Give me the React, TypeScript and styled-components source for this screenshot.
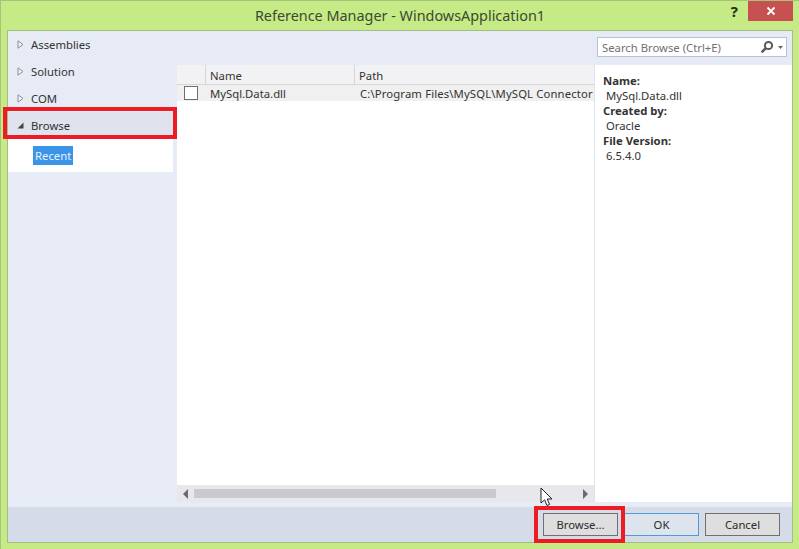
import React from 'react';
import styled, { createGlobalStyle } from 'styled-components';

const GlobalStyle = createGlobalStyle`
  html, body {
    margin: 0;
    padding: 0;
    background: #c6ea86;
  }
  body {
    font-family: 'Noto Sans', 'Open Sans', sans-serif;
    font-size: 11.3px;
    color: #2b2b2b;
  }
`;

const Window = styled.div`
  position: relative;
  width: 799px;
  height: 549px;
  box-sizing: border-box;
  display: flex;
  flex-direction: column;
  overflow: hidden;
  background: #c6ea86;
  border-top: 1px solid #a5c47a;
  border-left: 1px solid #a5c47a;
`;

const TitleBar = styled.div`
  position: relative;
  height: 29px;
  flex: none;
  display: flex;
  align-items: center;
  justify-content: center;
`;

const Title = styled.div`
  font-size: 14.4px;
  color: #3a4a32;
`;

const HelpMark = styled.span`
  position: absolute;
  top: 0;
  right: 61px;
  font-size: 15px;
  font-weight: 700;
  color: #1f2f18;
`;

const CloseButton = styled.div`
  position: absolute;
  top: 0;
  right: 6px;
  width: 45px;
  height: 20px;
  background: #c75050;
  color: #fff;
  display: flex;
  align-items: center;
  justify-content: center;
`;

const Client = styled.div`
  flex: 1;
  margin: 0 6px 6px 6px;
  min-height: 0;
  display: flex;
  flex-direction: column;
  border: 1px solid #a3bd85;
  background: #e6ebf5;
`;

const Main = styled.div`
  flex: 1;
  min-height: 0;
  display: flex;
`;

const Sidebar = styled.div`
  width: 169px;
  flex: none;
`;

const NavRow = styled.div<{ $active?: boolean }>`
  height: ${({ $active }) => ($active ? '26px' : '27px')};
  display: flex;
  align-items: center;
  padding-left: 9px;
  gap: 7px;
  margin-right: 4px;
  color: #333;
  background: ${({ $active }) => ($active ? '#dee3ee' : 'transparent')};
`;

const NavChildren = styled.div`
  height: 34px;
  margin-right: 4px;
  background: #fff;
  display: flex;
  align-items: center;
  padding-left: 25px;
`;

const SelectedItem = styled.span`
  background: #3b94e8;
  color: #e4f2ff;
  padding: 2px;
  line-height: 15px;
`;

const RightColumn = styled.div`
  flex: 1;
  min-width: 0;
  display: flex;
  flex-direction: column;
  padding-bottom: 5px;
`;

const SearchRow = styled.div`
  height: 34px;
  box-sizing: border-box;
  flex: none;
  display: flex;
  align-items: flex-start;
  justify-content: flex-end;
  padding: 6px 5px 0 0;
`;

const SearchBox = styled.div`
  width: 190px;
  height: 20px;
  box-sizing: border-box;
  display: flex;
  align-items: center;
  justify-content: space-between;
  padding: 0 3px 0 4px;
  background: #fff;
  border: 1px solid #b8c2d6;
  color: #717171;
`;

const SearchIcons = styled.span`
  display: flex;
  align-items: center;
  gap: 4px;
`;

const Panels = styled.div`
  flex: 1;
  min-height: 0;
  display: flex;
`;

const ListPane = styled.div`
  width: 417px;
  flex: none;
  display: flex;
  flex-direction: column;
`;

const ListBody = styled.div`
  flex: 1;
  min-height: 0;
  background: #fff;
  overflow: hidden;
`;

const HeaderRow = styled.div`
  height: 20px;
  box-sizing: border-box;
  display: grid;
  grid-template-columns: 29px 149px 1fr;
  background: #f2f2f4;
  border-bottom: 1px solid #d6d6d6;
`;

const HeaderCell = styled.div`
  display: flex;
  align-items: center;
  padding: 1px 0 0 4px;
  border-right: 1px solid #d6d6d6;
  color: #333;

  &:last-child {
    border-right: 0;
  }
`;

const DataRow = styled.div`
  height: 16px;
  display: grid;
  grid-template-columns: 29px 149px 1fr;
  background: #f0f0f0;
  line-height: 17px;
  color: #333;
`;

const DataCell = styled.div`
  padding-left: 4px;
  white-space: nowrap;
  overflow: hidden;
`;

const PathCell = styled(DataCell)`
  padding-left: 5px;
  letter-spacing: 0.13px;
`;

const CheckCell = styled.div`
  display: flex;
  align-items: center;
  padding-left: 7px;
`;

const CheckBox = styled.span`
  width: 12px;
  height: 12px;
  border: 1px solid #6f6f6f;
  background: #fff;
`;

const ScrollBar = styled.div`
  height: 17px;
  flex: none;
  display: flex;
  align-items: center;
  padding: 0 6px;
  gap: 6px;
  background: #e8e8ec;
`;

const ScrollTrack = styled.div`
  flex: 1;
  height: 9px;
`;

const ScrollThumb = styled.div`
  width: 302px;
  height: 100%;
  background: #c9c9ce;
`;

const ArrowLeft = styled.span`
  width: 0;
  height: 0;
  border-top: 5px solid transparent;
  border-bottom: 5px solid transparent;
  border-right: 5px solid #6a6a75;
`;

const ArrowRight = styled.span`
  width: 0;
  height: 0;
  border-top: 5px solid transparent;
  border-bottom: 5px solid transparent;
  border-left: 5px solid #6a6a75;
`;

const DetailsPane = styled.div`
  flex: 1;
  box-sizing: border-box;
  padding: 8px;
  background: #fff;
  border-left: 1px solid #dfe3ec;
  line-height: 15px;
  color: #333;
`;

const DetailLabel = styled.div`
  font-weight: 700;
`;

const DetailValue = styled.div`
  padding-left: 3px;
`;

const Footer = styled.div`
  height: 35px;
  box-sizing: border-box;
  flex: none;
  display: flex;
  justify-content: flex-end;
  align-items: flex-start;
  gap: 6px;
  padding: 6px 12px 0 0;
  background: #d6dbe8;
`;

const Button = styled.button<{ $primary?: boolean }>`
  width: 75px;
  height: 23px;
  padding: 0;
  font-family: inherit;
  font-size: 11.3px;
  color: #2b2b2b;
  background: ${({ $primary }) => ($primary ? '#dde4ee' : '#dedede')};
  border: 1px solid ${({ $primary }) => ($primary ? '#4f9bd6' : '#707070')};
`;

const Highlight = styled.div`
  position: absolute;
  box-sizing: border-box;
  border: 4px solid #ed1c24;
  pointer-events: none;
`;

const NavHighlight = styled(Highlight)`
  left: 2px;
  top: 106px;
  width: 174px;
  height: 32px;
`;

const ButtonHighlight = styled(Highlight)`
  left: 533px;
  top: 505px;
  width: 91px;
  height: 37px;
`;

const Cursor = styled.svg`
  position: absolute;
  left: 539px;
  top: 486px;
`;

const Caret = ({ open }: { open?: boolean }) =>
  open ? (
    <svg width="7" height="7" viewBox="0 0 7 7">
      <path d="M6.5 .5V6.5H.5Z" fill="#444" />
    </svg>
  ) : (
    <svg width="7" height="9" viewBox="0 0 7 9">
      <path d="M1 .8L6 4.5L1 8.2Z" fill="#f0f2f8" stroke="#8a8f9a" />
    </svg>
  );

const App = () => {
  return (
    <>
      <GlobalStyle />
      <Window>
        <TitleBar>
          <Title>Reference Manager - WindowsApplication1</Title>
          <HelpMark>?</HelpMark>
          <CloseButton>
            <svg width="10" height="10" viewBox="0 0 10 10">
              <path d="M1.5 1.5L8.5 8.5M8.5 1.5L1.5 8.5" stroke="#fff" strokeWidth="1.8" />
            </svg>
          </CloseButton>
        </TitleBar>

        <Client>
          <Main>
            <Sidebar>
              <NavRow><Caret />Assemblies</NavRow>
              <NavRow><Caret />Solution</NavRow>
              <NavRow><Caret />COM</NavRow>
              <NavRow $active><Caret open />Browse</NavRow>
              <NavChildren>
                <SelectedItem>Recent</SelectedItem>
              </NavChildren>
            </Sidebar>

            <RightColumn>
              <SearchRow>
                <SearchBox>
                  Search Browse (Ctrl+E)
                  <SearchIcons>
                    <svg width="14" height="14" viewBox="0 0 14 14">
                      <circle cx="8.5" cy="5.5" r="3.6" fill="none" stroke="#5a5a5a" strokeWidth="2" />
                      <path d="M5.8 8.2L1.6 12.4" stroke="#5a5a5a" strokeWidth="2.6" />
                    </svg>
                    <svg width="5" height="3" viewBox="0 0 5 3">
                      <path d="M0 0H5L2.5 3Z" fill="#666" />
                    </svg>
                  </SearchIcons>
                </SearchBox>
              </SearchRow>

              <Panels>
                <ListPane>
                  <ListBody>
                    <HeaderRow>
                      <HeaderCell />
                      <HeaderCell>Name</HeaderCell>
                      <HeaderCell>Path</HeaderCell>
                    </HeaderRow>
                    <DataRow>
                      <CheckCell><CheckBox /></CheckCell>
                      <DataCell>MySql.Data.dll</DataCell>
                      <PathCell>C:\Program Files\MySQL\MySQL Connector</PathCell>
                    </DataRow>
                  </ListBody>
                  <ScrollBar>
                    <ArrowLeft />
                    <ScrollTrack><ScrollThumb /></ScrollTrack>
                    <ArrowRight />
                  </ScrollBar>
                </ListPane>

                <DetailsPane>
                  <DetailLabel>Name:</DetailLabel>
                  <DetailValue>MySql.Data.dll</DetailValue>
                  <DetailLabel>Created by:</DetailLabel>
                  <DetailValue>Oracle</DetailValue>
                  <DetailLabel>File Version:</DetailLabel>
                  <DetailValue>6.5.4.0</DetailValue>
                </DetailsPane>
              </Panels>
            </RightColumn>
          </Main>

          <Footer>
            <Button>Browse...</Button>
            <Button $primary>OK</Button>
            <Button>Cancel</Button>
          </Footer>
        </Client>

        <NavHighlight />
        <ButtonHighlight />
        <Cursor width="14" height="20" viewBox="0 0 14 20">
          <path d="M1 1V16L4.6 12.8L7 18.5L9.6 17.4L7.2 12H12Z" fill="#fff" stroke="#222" strokeWidth="1" />
        </Cursor>
      </Window>
    </>
  );
};

export default App;
